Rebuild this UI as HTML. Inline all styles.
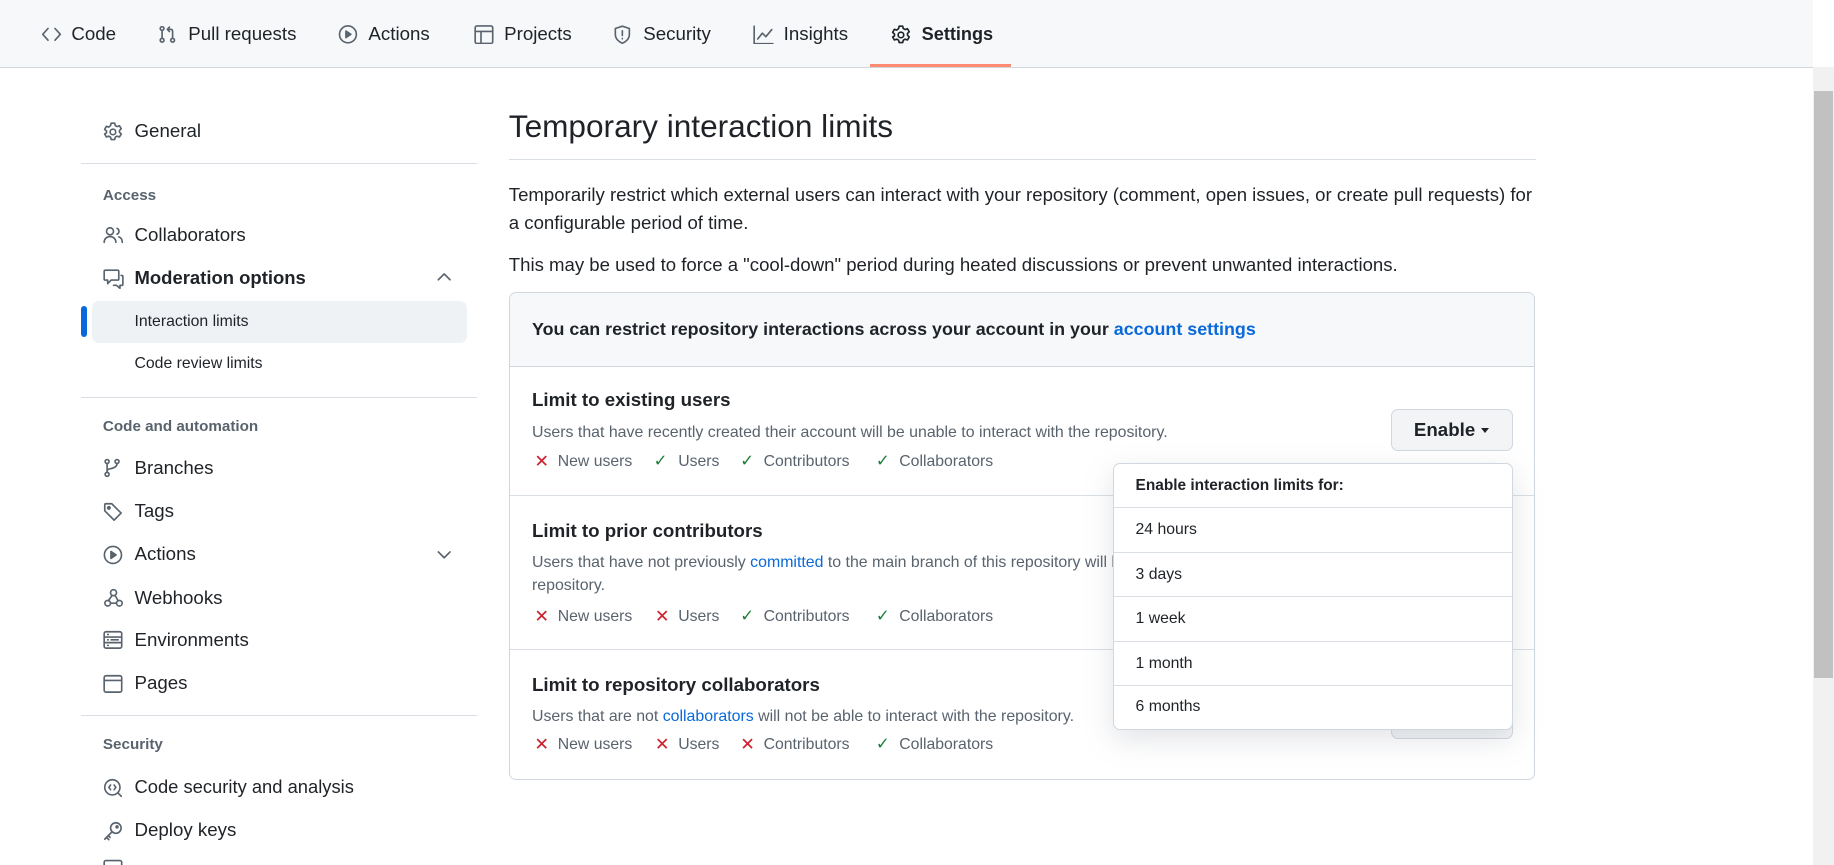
<!DOCTYPE html>
<html><head><meta charset="utf-8"><style>
html,body{margin:0;padding:0;background:#fff;overflow:hidden}
body{width:1834px;height:865px}
#w{zoom:1.16964;width:1568px;height:740px;position:relative;font-family:"Liberation Sans",Arial,sans-serif;color:#1f2328;overflow:hidden}
.a{position:absolute;white-space:nowrap}
.nav{position:absolute;left:0;top:0;width:1550px;height:57px;background:#f6f8fa;border-bottom:1px solid #d0d7de}
.tab{position:absolute;top:17px;height:24px;line-height:24px;font-size:16px;color:#1f2328}
.tab svg,.si svg{position:absolute;left:0;top:4px}
.tab span{position:absolute;white-space:nowrap}
.si{position:absolute;left:88px;height:24px;line-height:24px;font-size:16px}
.si span{position:absolute;left:27px;white-space:nowrap}
.hd{position:absolute;left:88px;font-size:13px;font-weight:bold;color:#59636e;line-height:20px}
.div{position:absolute;left:69px;width:339px;height:1px;background:#d8dee4}
.sub{position:absolute;left:115px;font-size:13.5px;line-height:20px}
svg{fill:none;stroke:#59636e;stroke-width:1.4;stroke-linecap:round;stroke-linejoin:round}
.p{position:absolute;left:435px;font-size:15.9px;line-height:24px;color:#1f2328;white-space:nowrap}
.box{position:absolute;left:435px;top:250px;width:876px;height:415px;border:1px solid #d0d7de;border-radius:6px;overflow:hidden}
.rt{position:absolute;left:19px;font-size:16px;font-weight:bold;line-height:22px}
.rd{position:absolute;left:19px;font-size:13.6px;color:#59636e;line-height:20px;white-space:nowrap}
.ch{position:absolute;left:0;width:500px;height:20px;font-size:13.5px;color:#59636e;line-height:20px;white-space:nowrap}
.ch span{position:absolute}
.x{color:#cf222e;font-size:15px}
.ok{color:#1a7f37;font-size:14px}
.lk{color:#0969da}
.btn{position:absolute;left:1189px;width:103px;height:34px;background:#f3f4f6;border:1px solid #d0d7de;border-radius:6px;font-size:16px;font-weight:bold;line-height:34px;box-sizing:content-box}
.dd{position:absolute;left:952px;top:396px;width:340px;height:226px;background:#fff;border:1px solid #d0d7de;border-radius:6px;box-shadow:0 8px 24px rgba(140,149,159,.25)}
.dd div{position:absolute;left:0;width:340px;border-top:1px solid #d8dee4;font-size:13.5px;line-height:20px;padding-left:18px;box-sizing:border-box}
</style></head><body><div id="w">
<div class="nav">
 <div class="tab" style="left:35px"><svg width="18" height="16" viewBox="0 0 18 16"><path d="M6 3L1.5 8 6 13M12 3l4.5 5-4.5 5"/></svg><span style="left:26px">Code</span></div>
 <div class="tab" style="left:135px"><svg width="16" height="16" viewBox="0 0 16 16"><circle cx="3.5" cy="3" r="1.6"/><circle cx="3.5" cy="13" r="1.6"/><circle cx="12.5" cy="13" r="1.6"/><path d="M3.5 4.6v6.8M12.5 11.4V5.5c0-1-.6-1.8-1.8-1.8H8M9.8 1.8L8 3.7l1.8 1.9"/></svg><span style="left:26px">Pull requests</span></div>
 <div class="tab" style="left:289px"><svg width="17" height="17" viewBox="0 0 17 17"><circle cx="8.5" cy="8" r="7.2"/><path d="M6.8 5.2v5.6L11 8z" fill="#59636e"/></svg><span style="left:26px">Actions</span></div>
 <div class="tab" style="left:405px"><svg width="17" height="17" viewBox="0 0 17 17"><rect x="1" y="0.8" width="15" height="15" rx="1.5"/><path d="M1 5.5h15M6 5.5v10.3"/></svg><span style="left:26px">Projects</span></div>
 <div class="tab" style="left:524px"><svg width="16" height="17" viewBox="0 0 16 17"><path d="M8 1L2 3v5c0 3.5 2.6 6.3 6 7.6 3.4-1.3 6-4.1 6-7.6V3z M8 5v4M8 11.5v.3"/></svg><span style="left:26px">Security</span></div>
 <div class="tab" style="left:644px"><svg width="18" height="17" viewBox="0 0 18 17"><path d="M1 1v15h16M4 12l4-5 3 3 5-6"/></svg><span style="left:26px">Insights</span></div>
 <div class="tab" style="left:762px;font-weight:bold;font-size:15.5px"><svg width="17" height="17" viewBox="0 0 17 17" style="stroke:#1f2328"><circle cx="8.5" cy="8.5" r="2.4"/><path d="M7 1h3l.5 2 1.6.9 2-.7 1.5 2.6-1.5 1.4v1.6l1.5 1.4-1.5 2.6-2-.7-1.6.9-.5 2H7l-.5-2-1.6-.9-2 .7-1.5-2.6L3 9.3V7.7L1.4 6.3l1.5-2.6 2 .7L6.5 3z"/></svg><span style="left:26px">Settings</span></div>
 <div class="a" style="left:744px;top:55px;width:120px;height:2px;background:#fd8c73"></div>
</div>
<div class="a" style="left:1550px;top:57px;width:18px;height:683px;background:#f1f1f1"></div>
<div class="a" style="left:1551px;top:78px;width:16px;height:502px;background:#c1c1c1"></div>

<div class="si" style="top:100px"><svg width="17" height="17" viewBox="0 0 17 17"><circle cx="8.5" cy="8.5" r="2.4"/><path d="M7 1h3l.5 2 1.6.9 2-.7 1.5 2.6-1.5 1.4v1.6l1.5 1.4-1.5 2.6-2-.7-1.6.9-.5 2H7l-.5-2-1.6-.9-2 .7-1.5-2.6L3 9.3V7.7L1.4 6.3l1.5-2.6 2 .7L6.5 3z"/></svg><span>General</span></div>
<div class="div" style="top:139px"></div>
<div class="hd" style="top:157px">Access</div>
<div class="si" style="top:189px"><svg width="18" height="16" viewBox="0 0 18 16"><circle cx="6" cy="4.5" r="3"/><path d="M1 14c0-3 2.2-5 5-5s5 2 5 5M12 2a2.7 2.7 0 010 5M13.5 9.3c2 .7 3 2.5 3 4.7"/></svg><span>Collaborators</span></div>
<div class="si" style="top:226px;font-weight:bold"><svg width="18" height="17" viewBox="0 0 18 17"><path d="M2 1h10.5c.6 0 1 .4 1 1v6.5c0 .6-.4 1-1 1H7L4 12.5V9.5H2c-.6 0-1-.4-1-1V2c0-.6.4-1 1-1zM15.5 5.5h.5c.6 0 1 .4 1 1V13c0 .6-.4 1-1 1h-1.5v2.5L11.5 14H9"/></svg><span style="font-size:15.8px">Moderation options</span></div>
<svg class="a" style="left:373px;top:232px" width="14" height="10" viewBox="0 0 14 10"><path d="M2 7.5l5-5 5 5"/></svg>
<div class="a" style="left:79px;top:257px;width:320px;height:36px;background:#eff2f5;border-radius:6px"></div>
<div class="a" style="left:69px;top:262px;width:5px;height:26px;background:#0969da;border-radius:3px"></div>
<div class="sub" style="top:265px">Interaction limits</div>
<div class="sub" style="top:301px">Code review limits</div>
<div class="div" style="top:339px"></div>
<div class="hd" style="top:355px">Code and automation</div>
<div class="si" style="top:388px"><svg width="16" height="17" viewBox="0 0 16 17"><circle cx="3.5" cy="3" r="1.7"/><circle cx="3.5" cy="14" r="1.7"/><circle cx="12" cy="3" r="1.7"/><path d="M3.5 4.7v7.6M12 4.7c0 3-3 4-6 4.5-1.5.3-2.5 1-2.5 2.5"/></svg><span>Branches</span></div>
<div class="si" style="top:425px"><svg width="17" height="17" viewBox="0 0 17 17"><path d="M1.5 2.5v5l8 8 6-6-8-8h-5c-.6 0-1 .4-1 1z"/><circle cx="5" cy="5" r="1" fill="#59636e"/></svg><span>Tags</span></div>
<div class="si" style="top:462px"><svg width="17" height="17" viewBox="0 0 17 17"><circle cx="8.5" cy="8.5" r="7.3"/><path d="M6.8 5.5v6l4.4-3z" fill="#59636e"/></svg><span>Actions</span></div>
<svg class="a" style="left:373px;top:469px" width="14" height="10" viewBox="0 0 14 10"><path d="M2 2.5l5 5 5-5"/></svg>
<div class="si" style="top:499px"><svg width="18" height="17" viewBox="0 0 18 17"><circle cx="9" cy="4" r="2.6"/><circle cx="4" cy="13" r="2.4"/><circle cx="14" cy="13" r="2.4"/><path d="M7.8 6.3L4.5 11M6.5 13h5M10.3 6.3L13 11"/></svg><span>Webhooks</span></div>
<div class="si" style="top:535px"><svg width="17" height="17" viewBox="0 0 17 17"><rect x="1" y="1.5" width="15" height="14" rx="1.5"/><path d="M1 6h15M1 10.8h15M4 3.8h.5M4 8.4h.5M4 13.2h.5M7 8.4h6"/></svg><span>Environments</span></div>
<div class="si" style="top:572px"><svg width="17" height="17" viewBox="0 0 17 17"><rect x="1" y="1.5" width="15" height="14" rx="1.5"/><path d="M1 5.5h15"/></svg><span>Pages</span></div>
<div class="div" style="top:611px"></div>
<div class="hd" style="top:627px">Security</div>
<div class="si" style="top:661px"><svg width="17" height="17" viewBox="0 0 17 17"><circle cx="8" cy="8" r="6.5"/><path d="M12.6 12.6l3 3M6.5 6l-1.5 2 1.5 2M9.5 6l1.5 2-1.5 2"/></svg><span style="font-size:15.7px">Code security and analysis</span></div>
<div class="si" style="top:698px"><svg width="17" height="17" viewBox="0 0 17 17"><circle cx="11" cy="6" r="4.5"/><path d="M7.8 9.2L1.5 15.5M3 14l2 2M4.5 12.5l1.5 1.5"/><circle cx="12" cy="5" r=".8" fill="#59636e"/></svg><span>Deploy keys</span></div>
<svg class="a" style="left:88px;top:733px" width="17" height="10" viewBox="0 0 17 10"><rect x="1" y="3" width="15" height="12" rx="1.5"/></svg>

<div class="a" style="left:435px;top:90px;font-size:27px;line-height:36px">Temporary interaction limits</div>
<div class="a" style="left:435px;top:136px;width:878px;height:1px;background:#d8dee4"></div>
<div class="p" style="top:155px">Temporarily restrict which external users can interact with your repository (comment, open issues, or create pull requests) for</div>
<div class="p" style="top:179px">a configurable period of time.</div>
<div class="p" style="top:215px">This may be used to force a "cool-down" period during heated discussions or prevent unwanted interactions.</div>

<div class="box">
 <div class="a" style="left:0;top:0;width:876px;height:62px;background:#f6f8fa;border-bottom:1px solid #d0d7de"></div>
 <div class="a" style="left:19px;top:20px;font-size:15.3px;font-weight:bold;line-height:22px">You can restrict repository interactions across your account in your <span class="lk">account settings</span></div>
 <div class="rt" style="top:80px">Limit to existing users</div>
 <div class="rd" style="top:109px">Users that have recently created their account will be unable to interact with the repository.</div>
 <div class="ch" style="top:134px"><span class="x" style="left:21px">✕</span><span style="left:41px">New users</span><span class="ok" style="left:123px">✓</span><span style="left:144px">Users</span><span class="ok" style="left:197px">✓</span><span style="left:217px">Contributors</span><span class="ok" style="left:313px">✓</span><span style="left:333px">Collaborators</span></div>
 <div class="a" style="left:0;top:172px;width:876px;height:1px;background:#d8dee4"></div>
 <div class="rt" style="top:192px">Limit to prior contributors</div>
 <div class="rd" style="top:220px">Users that have not previously <span class="lk">committed</span> to the main branch of this repository will be unable to interact with the</div>
 <div class="rd" style="top:240px">repository.</div>
 <div class="ch" style="top:266px"><span class="x" style="left:21px">✕</span><span style="left:41px">New users</span><span class="x" style="left:124px">✕</span><span style="left:144px">Users</span><span class="ok" style="left:197px">✓</span><span style="left:217px">Contributors</span><span class="ok" style="left:313px">✓</span><span style="left:333px">Collaborators</span></div>
 <div class="a" style="left:0;top:304px;width:876px;height:1px;background:#d8dee4"></div>
 <div class="rt" style="top:324px">Limit to repository collaborators</div>
 <div class="rd" style="top:352px">Users that are not <span class="lk">collaborators</span> will not be able to interact with the repository.</div>
 <div class="ch" style="top:376px"><span class="x" style="left:21px">✕</span><span style="left:41px">New users</span><span class="x" style="left:124px">✕</span><span style="left:144px">Users</span><span class="x" style="left:197px">✕</span><span style="left:217px">Contributors</span><span class="ok" style="left:313px">✓</span><span style="left:333px">Collaborators</span></div>
</div>
<div class="btn" style="top:350px"><span style="position:absolute;left:19px">Enable</span><span style="position:absolute;left:76px;top:15px;border:4px solid transparent;border-top:5px solid #1f2328;border-bottom:0"></span></div>
<div class="btn" style="top:596px"></div>
<div class="dd">
 <div style="top:8px;border-top:0;font-weight:bold;color:#1f2328;font-size:13.2px">Enable interaction limits for:</div>
 <div style="top:37px;height:38px;line-height:37px">24 hours</div>
 <div style="top:75px;height:38px;line-height:37px">3 days</div>
 <div style="top:113px;height:38px;line-height:37px">1 week</div>
 <div style="top:151px;height:38px;line-height:37px">1 month</div>
 <div style="top:189px;height:37px;line-height:36px">6 months</div>
</div>
</div></body></html>
